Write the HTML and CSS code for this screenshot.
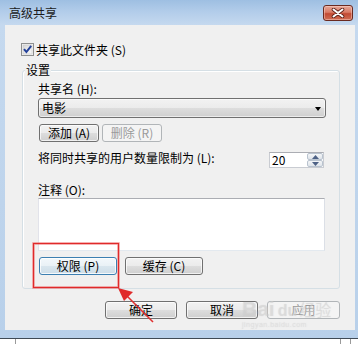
FILE: index.html
```html
<!DOCTYPE html>
<html lang="zh-CN">
<head>
<meta charset="utf-8">
<title>高级共享</title>
<link rel="stylesheet" href="styles.css">
</head>
<body>
<div class="window">
  <div class="titlebar">
    <span class="title">高级共享</span>
    <span class="close">
      <svg width="14" height="10" viewBox="0 0 14 10"><path d="M2.5 1.5 L11.5 8.5 M11.5 1.5 L2.5 8.5" stroke="#5a2018" stroke-width="3.6" stroke-linecap="round"/><path d="M2.5 1.5 L11.5 8.5 M11.5 1.5 L2.5 8.5" stroke="#ffffff" stroke-width="2" stroke-linecap="round"/></svg>
    </span>
  </div>
  <div class="client">
    <div class="share-row">
      <span class="checkbox">
        <svg width="13" height="13" viewBox="0 0 13 13"><defs><linearGradient id="cbg" x1="0" y1="0" x2="1" y2="1"><stop offset="0" stop-color="#d6d6d6"/><stop offset="1" stop-color="#fbfbfb"/></linearGradient></defs><rect x="0.5" y="0.5" width="12" height="12" fill="#f4f4f4" stroke="#8e8f8f"/><rect x="2" y="2" width="9" height="9" fill="url(#cbg)" stroke="#c6c6c6" stroke-width="0.6"/><path d="M3 6.2 L5.4 9 L10.2 2.8" fill="none" stroke="#23419a" stroke-width="2"/></svg>
      </span>
      <span>共享此文件夹 (S)</span>
    </div>
    <div class="group">
      <div class="group-title">设置</div>
      <div class="group-body">
        <div class="field-label">共享名 (H):</div>
        <div class="combo"><span>电影</span><span class="caret"></span></div>
        <div class="btn-row upper">
          <div class="btn small">添加 (A)</div>
          <div class="btn small disabled">删除 (R)</div>
        </div>
        <div class="limit-row">
          <span class="limit-label">将同时共享的用户数量限制为 (L):</span>
          <div class="spin">
            <span class="spin-val">20</span>
            <span class="spin-btns">
              <span class="spin-btn"><svg width="7" height="4" viewBox="0 0 7 4"><path d="M0 4 L3.5 0 L7 4 Z" fill="#4d6185"/></svg></span>
              <span class="spin-btn"><svg width="7" height="4" viewBox="0 0 7 4"><path d="M0 0 L3.5 4 L7 0 Z" fill="#4d6185"/></svg></span>
            </span>
          </div>
        </div>
        <div class="field-label note-label">注释 (O):</div>
        <div class="note"></div>
        <div class="btn-row lower">
          <div class="btn mid focus">权限 (P)</div>
          <div class="btn mid">缓存 (C)</div>
        </div>
      </div>
    </div>
    <div class="dialog-btns">
      <div class="btn wide">确定</div>
      <div class="btn wide">取消</div>
      <div class="btn wide disabled last">应用</div>
    </div>
  </div>
</div>
<div class="desktop"><span class="tick t1"></span><span class="tick t2"></span><span class="tick t3"></span></div>

<div class="watermark">
  <span class="wm-bai">Bai</span><span class="wm-du">du</span><span class="wm-jy">经验</span>
  <div class="wm-url">jingyan.baidu.com</div>
</div>

<svg class="annot" width="358" height="344" viewBox="0 0 358 344">
  <rect x="33.5" y="243.5" width="85" height="44" fill="none" stroke="#f28a8a" stroke-width="3" opacity="0.45"/>
  <rect x="33.5" y="243.5" width="85" height="44" fill="none" stroke="#e02a2a" stroke-width="1.3"/>
  <path d="M153 322 L126 295" stroke="#e03030" stroke-width="1.6"/>
  <path d="M118 288 L133 292 L124 301 Z" fill="#e02a2a"/>
</svg>
</body>
</html>
```

FILE: styles.css
```css
* {
  box-sizing: border-box;
}

html, body {
  margin: 0;
  padding: 0;
}

body {
  width: 358px;
  height: 344px;
  overflow: hidden;
  position: relative;
  background: #ffffff;
  font-family: "Noto Sans CJK SC", "Noto Sans", sans-serif;
  font-size: 12px;
  color: #000;
}

.window {
  height: 338px;
  display: flex;
  flex-direction: column;
  background: linear-gradient(180deg, #9ebfe2 0, #b3cdea 12px, #c5d9ef 25px, #bed4ec 60%, #b8d0ea 100%);
}

.titlebar {
  height: 25px;
  flex: none;
  display: flex;
  justify-content: space-between;
  align-items: flex-start;
  padding: 0 5px 0 9px;
}

.title {
  margin-top: 6px;
  line-height: 14px;
  color: #1b1b1b;
}

.close {
  width: 30px;
  height: 16px;
  margin-top: 5px;
  border: 1px solid #6a2a20;
  border-radius: 3px;
  background: linear-gradient(180deg, #e6a898 0, #d97a65 45%, #c24a33 55%, #cf6e55 100%);
  box-shadow: inset 0 0 0 1px rgba(255, 220, 210, 0.45);
  display: flex;
  align-items: center;
  justify-content: center;
}

.client {
  margin: 0 3px 0 5px;
  height: 305px;
  flex: none;
  background: #f0f0f0;
  display: flex;
  flex-direction: column;
}

.share-row {
  margin: 18px 0 0 16px;
  height: 13px;
  display: flex;
  align-items: center;
  gap: 2px;
  line-height: 13px;
}

.checkbox {
  width: 13px;
  height: 13px;
  display: flex;
}

.group {
  margin: 14px 0 0 17px;
  width: 318px;
  height: 219px;
  border: 1px solid #d5dfe5;
  border-radius: 3px;
  box-shadow: inset 1px 1px 0 #ffffff;
}

.group-title {
  margin: -8px 0 0 2px;
  padding: 0 1px;
  width: fit-content;
  line-height: 14px;
  background: #f0f0f0;
}

.group-body {
  padding-left: 15px;
  display: flex;
  flex-direction: column;
}

.field-label {
  margin-top: 5px;
  line-height: 14px;
}

.combo {
  margin-top: 2px;
  width: 288px;
  height: 20px;
  border: 1px solid #707070;
  border-radius: 3px;
  background: linear-gradient(180deg, #f2f2f2 0, #ebebeb 50%, #dddddd 51%, #cfcfcf 100%);
  box-shadow: inset 0 0 0 1px rgba(255, 255, 255, 0.6);
  display: flex;
  justify-content: space-between;
  align-items: center;
  padding: 0 4px 0 3px;
  line-height: 14px;
}

.caret {
  width: 0;
  height: 0;
  border-left: 3.5px solid transparent;
  border-right: 3.5px solid transparent;
  border-top: 4px solid #000;
  margin-top: 1px;
}

.btn-row {
  display: flex;
  margin-left: 1px;
}

.btn-row.upper {
  margin-top: 6px;
  gap: 3px;
}

.btn-row.lower {
  margin-top: 6px;
  gap: 8px;
}

.btn {
  height: 18px;
  border: 1px solid #707070;
  border-radius: 3px;
  background: linear-gradient(180deg, #f2f2f2 0, #ebebeb 50%, #dddddd 51%, #cfcfcf 100%);
  box-shadow: inset 0 0 0 1px rgba(255, 255, 255, 0.7);
  display: flex;
  align-items: center;
  justify-content: center;
  line-height: 14px;
  color: #000;
}

.btn.small {
  width: 60px;
}

.btn.mid {
  width: 78px;
}

.btn.wide {
  width: 72px;
}

.btn.wide.last {
  width: 73px;
}

.btn.disabled {
  border-color: #b1b5b8;
  background: #f4f4f4;
  box-shadow: none;
  color: #9a9a9a;
}

.btn.focus {
  border-color: #3c7fb1;
  background: linear-gradient(180deg, #f3f8fb 0, #e9f1f6 50%, #d9e6ee 51%, #cddde8 100%);
  box-shadow: inset 0 0 0 1px rgba(255, 255, 255, 0.8);
}

.limit-row {
  margin-top: 9px;
  width: 286px;
  display: flex;
  justify-content: space-between;
  align-items: flex-start;
}

.limit-label {
  line-height: 14px;
}

.spin {
  margin-top: 1px;
  width: 55px;
  height: 16px;
  border: 1px solid #c9ccd2;
  border-top-color: #abadb3;
  background: #ffffff;
  display: flex;
  justify-content: space-between;
}

.spin-val {
  padding-left: 2px;
  line-height: 14px;
}

.spin-btns {
  width: 16px;
  display: flex;
  flex-direction: column;
}

.spin-btn {
  flex: 1;
  display: flex;
  align-items: center;
  justify-content: center;
  border: 1px solid #b9c3cf;
  border-radius: 2px;
  background: linear-gradient(180deg, #f4f6f8, #dfe4ea);
}

.note-label {
  margin-top: 15px;
}

.note {
  margin-top: 1px;
  width: 287px;
  height: 53px;
  background: #ffffff;
  border: 1px solid;
  border-color: #abadb3 #dbdfe6 #e3e9ef #e2e3ea;
}

.dialog-btns {
  margin: 12px 15px 0 0;
  display: flex;
  justify-content: flex-end;
  gap: 9px;
}

.desktop {
  height: 6px;
  border-top: 1px solid #3f4a55;
  background: #ffffff;
  display: flex;
}

.tick {
  width: 1px;
  height: 5px;
  background: #9a9a9a;
}

.t1 {
  margin-left: 15px;
}

.t2 {
  margin-left: 324px;
}

.t3 {
  margin-left: 9px;
}

.watermark {
  position: absolute;
  left: 242px;
  top: 297px;
  width: 100px;
  color: rgba(215, 215, 215, 0.45);
  text-shadow: 0 0 1px rgba(180, 180, 180, 0.35);
  white-space: nowrap;
  pointer-events: none;
}

.wm-bai {
  font-family: "Liberation Sans", sans-serif;
  font-weight: bold;
  font-size: 21px;
  line-height: 22px;
}

.wm-du {
  font-family: "Liberation Sans", sans-serif;
  font-weight: bold;
  font-size: 16px;
  margin-left: 3px;
}

.wm-jy {
  font-size: 16px;
  margin-left: 2px;
}

.wm-url {
  font-family: "Liberation Sans", sans-serif;
  font-size: 7px;
  line-height: 8px;
  letter-spacing: 0.5px;
  color: rgba(220, 220, 220, 0.4);
}

.annot {
  position: absolute;
  left: 0;
  top: 0;
  pointer-events: none;
}
```
